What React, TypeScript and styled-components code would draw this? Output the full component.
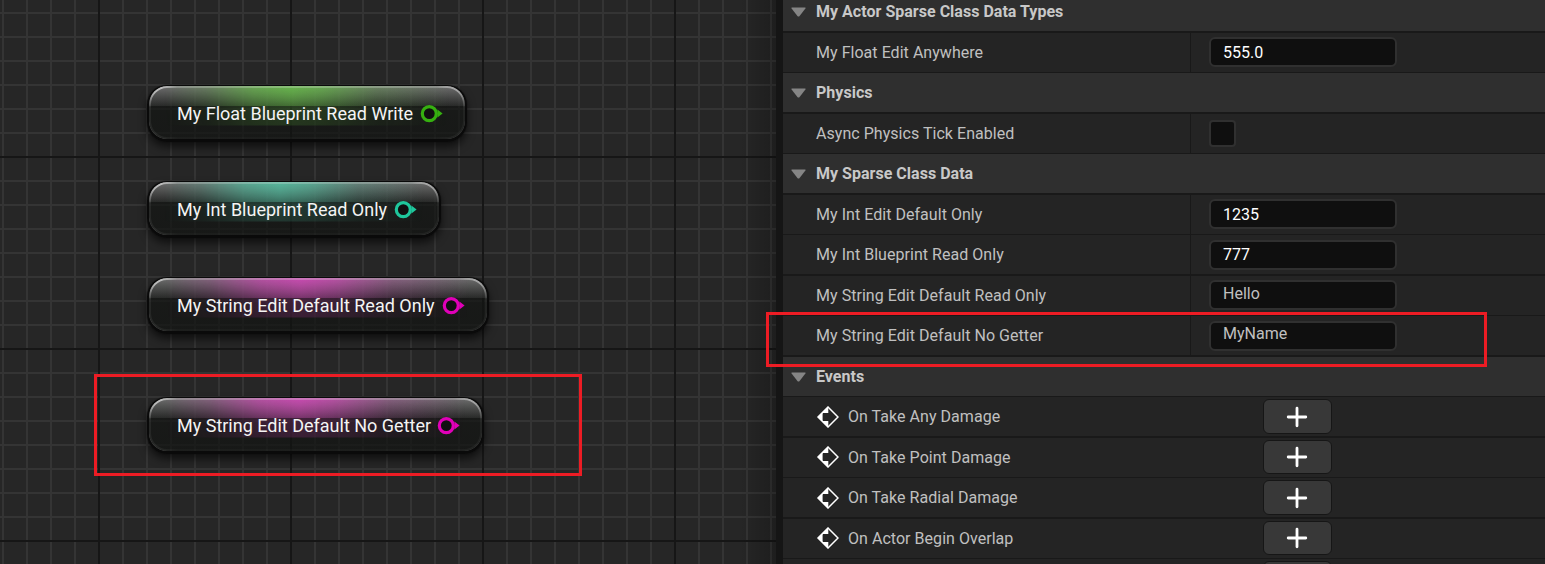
import React from "react";
import styled, { createGlobalStyle } from "styled-components";

const GlobalStyle = createGlobalStyle`
  html, body { margin: 0; padding: 0; background: #151515; }
  body { font-family: Roboto, "Liberation Sans", sans-serif; overflow: hidden; }
  * { box-sizing: border-box; }
`;

const Editor = styled.main`
  position: relative;
  display: flex;
  width: 1545px;
  height: 564px;
  overflow: hidden;
  background: #151515;
`;

const Graph = styled.section`
  position: relative;
  flex: 0 0 776px;
  height: 564px;
  overflow: hidden;
  background-color: #262626;
  background-image:
    linear-gradient(to right, transparent 740px, rgba(0, 0, 0, 0.22) 776px),
    linear-gradient(to right, #161616 2px, transparent 2px),
    linear-gradient(to bottom, #161616 2px, transparent 2px),
    linear-gradient(to right, #343434 2px, transparent 2px),
    linear-gradient(to bottom, #343434 2px, transparent 2px);
  background-size: 100% 100%, 192px 192px, 192px 192px, 24px 24px, 24px 24px;
  background-position: 0 0, 98px 0, 0 156px, 2px 0, 0 12px;
`;

const NodeBox = styled.div<{ $top: number; $width: number; $glow: string }>`
  position: absolute;
  left: 147px;
  top: ${(p) => p.$top}px;
  width: ${(p) => p.$width}px;
  height: 57px;
  display: flex;
  align-items: center;
  padding: 3px 0 0 28px;
  border: solid #0a0a0a;
  border-width: 1px 2px 3px;
  border-radius: 20px;
  background:
    linear-gradient(rgba(150, 150, 150, 0.68), rgba(90, 90, 90, 0.25)) 0 0 / 100% 20px no-repeat,
    linear-gradient(rgba(18, 20, 18, 0.66), rgba(18, 20, 18, 0.74));
  background-origin: padding-box;
  background-clip: padding-box;
  box-shadow: 0 5px 9px rgba(0, 0, 0, 0.6), 0 0 1px #0a0a0a;
  color: #f4f4f4;
  font-size: 18px;
  line-height: 24px;
  white-space: nowrap;

  /* coloured glow behind the title */
  &::before {
    content: "";
    position: absolute;
    inset: 0;
    border-radius: 18px;
    background: linear-gradient(
      to right,
      transparent 5%,
      rgb(${(p) => p.$glow} / 0.2) 18%,
      rgb(${(p) => p.$glow} / 0.62) 33%,
      rgb(${(p) => p.$glow} / 0.78) 45%,
      rgb(${(p) => p.$glow} / 0.64) 55%,
      rgb(${(p) => p.$glow} / 0.24) 72%,
      transparent 95%
    );
    mask-image: linear-gradient(#000, rgba(0, 0, 0, 0.55) 20px, rgba(0, 0, 0, 0.27) 20px, rgba(0, 0, 0, 0.22) 39px, transparent 40px);
  }

  /* bright rim on the upper edge, strongest at the corners */
  &::after {
    content: "";
    position: absolute;
    inset: 0;
    border-radius: 18px;
    border: 2px solid rgba(225, 225, 225, 0.7);
    mask-image: linear-gradient(#000 6px, rgba(0, 0, 0, 0.1) 22px, rgba(0, 0, 0, 0.1)),
      linear-gradient(to right, #000 12px, rgba(0, 0, 0, 0.4) 28px, rgba(0, 0, 0, 0.4) calc(100% - 28px), rgba(0, 0, 0, 0.75) calc(100% - 14px));
    mask-composite: intersect;
  }
`;

const NodeTitle = styled.span<{ $width: number }>`
  position: relative;
  z-index: 1;
  flex: 0 0 ${(p) => p.$width}px;
  min-width: 0;
`;

const PinIcon = styled.svg`
  position: relative;
  z-index: 1;
  flex: none;
  width: 24px;
  height: 20px;
  margin-left: 6px;
`;

const Highlight = styled.div<{ $x: number; $y: number; $w: number; $h: number }>`
  position: absolute;
  z-index: 2;
  left: ${(p) => p.$x}px;
  top: ${(p) => p.$y}px;
  width: ${(p) => p.$w}px;
  height: ${(p) => p.$h}px;
  border: 3px solid #ed1c24;
`;

const Details = styled.section`
  flex: 1;
  margin-left: 7px;
  height: 564px;
  overflow: hidden;
  background: #191919;
`;

const Header = styled.header<{ $first?: boolean; $line: number }>`
  display: flex;
  align-items: center;
  height: ${(p) => (p.$first ? 31 : 39)}px;
  margin-bottom: ${(p) => p.$line}px;
  padding: ${(p) => (p.$first ? "0 0 8px 8px" : "0 0 0 8px")};
  background: #2f2f2f;
  color: #c8c8c8;
  font-size: 16px;
  font-weight: 700;
  letter-spacing: 0.02px;
  line-height: 20px;
`;

const Arrow = styled.svg`
  width: 15px;
  height: 10px;
  margin-right: 10px;
`;

const Row = styled.div<{ $line: number }>`
  display: flex;
  height: 39px;
  margin-bottom: ${(p) => p.$line}px;
  background: #242424;
  color: #c0c0c0;
  font-size: 16px;
  letter-spacing: 0.04px;
  line-height: 20px;
`;

const Label = styled.div`
  flex: 0 0 408px;
  padding: 10px 0 0 33px;
  border-right: 1px solid #191919;
`;

const Value = styled.div<{ $offset: number }>`
  padding: ${(p) => p.$offset}px 0 0 18px;
`;

const Field = styled.div<{ $text?: boolean; $raised?: boolean }>`
  width: 188px;
  height: 30px;
  padding: ${(p) => (p.$text ? 2 : 4) - (p.$raised ? 1 : 0)}px 0 0 12px;
  border: 2px solid #303030;
  border-radius: 6px;
  background: #0f0f0f;
  color: ${(p) => (p.$text ? "#c0c0c0" : "#ffffff")};
  letter-spacing: 0;
`;

const Check = styled.div`
  width: 27px;
  height: 27px;
  border: 2px solid #303030;
  border-radius: 4px;
  background: #0f0f0f;
`;

const EventLabel = styled.div<{ $short?: boolean }>`
  display: flex;
  align-items: center;
  flex: 0 0 480px;
  padding: 0 0 ${(p) => (p.$short ? 2 : 0)}px 34px;
`;

const EventName = styled.span<{ $short?: boolean }>`
  padding-top: ${(p) => (p.$short ? 2 : 0)}px;
`;

const EventIcon = styled.svg`
  width: 22px;
  height: 22px;
  margin-right: 9px;
`;

const AddButton = styled.button<{ $short?: boolean }>`
  display: flex;
  align-items: center;
  justify-content: center;
  width: 69px;
  height: ${(p) => (p.$short ? 34 : 35)}px;
  margin: 2px 0 0;
  padding: 0 1px 0 0;
  border: 1px solid #161616;
  border-radius: 6px;
  background: #383838;
`;

const nodes = [
  { title: "My Float Blueprint Read Write", top: 85, width: 320, text: 236, glow: "100 200 65", pin: "#36b010" },
  { title: "My Int Blueprint Read Only", top: 181, width: 294, text: 210, glow: "80 205 170", pin: "#1fc79c" },
  { title: "My String Edit Default Read Only", top: 277, width: 342, text: 258, glow: "225 65 195", pin: "#e000b8" },
  { title: "My String Edit Default No Getter", top: 397, width: 337, text: 253, glow: "225 65 195", pin: "#e000b8" },
];

const events = [
  { name: "On Take Any Damage", line: 2, short: false },
  { name: "On Take Point Damage", line: 1, short: true },
  { name: "On Take Radial Damage", line: 2, short: false },
  { name: "On Actor Begin Overlap", line: 1, short: true },
];

function Section({ title, first, line = 2 }: { title: string; first?: boolean; line?: number }) {
  return (
    <Header $first={first} $line={line}>
      <Arrow viewBox="0 0 15 10">
        <path d="M1 0.5H14Q15 0.5 14.4 1.4L8.6 9Q7.5 10.2 6.4 9L0.6 1.4Q0 0.5 1 0.5Z" fill="#858585" />
      </Arrow>
      <span>{title}</span>
    </Header>
  );
}

type PropertyProps = { name: string; value: string; text?: boolean; offset?: number; line: number };

function Property({ name, value, text, offset = 4, line }: PropertyProps) {
  return (
    <Row $line={line}>
      <Label>{name}</Label>
      <Value $offset={offset}>
        <Field $text={text} $raised={offset === 5}>
          {value}
        </Field>
      </Value>
    </Row>
  );
}

function Plus() {
  return (
    <svg width="22" height="22" viewBox="0 0 22 22">
      <path d="M11 2.2V19.8M2.2 11H19.8" stroke="#fff" strokeWidth="2.8" strokeLinecap="round" />
    </svg>
  );
}

export default function App() {
  return (
    <>
      <GlobalStyle />
      <Editor>
        <Graph>
          {nodes.map((n) => (
            <NodeBox key={n.title} $top={n.top} $width={n.width} $glow={n.glow}>
              <NodeTitle $width={n.text}>{n.title}</NodeTitle>
              <PinIcon viewBox="0 0 24 20">
                <circle cx="10.3" cy="9.6" r="7" fill="#101010" stroke={n.pin} strokeWidth="3.2" />
                <path d="M18.4 5.6L23.6 9.6L18.4 13.6Z" fill={n.pin} />
              </PinIcon>
            </NodeBox>
          ))}
          <Highlight $x={94} $y={374} $w={488} $h={102} />
        </Graph>
        <Details>
          <Section title="My Actor Sparse Class Data Types" first />
          <Property name="My Float Edit Anywhere" value="555.0" line={1} />
          <Section title="Physics" />
          <Row $line={1}>
            <Label>Async Physics Tick Enabled</Label>
            <Value $offset={6}>
              <Check />
            </Value>
          </Row>
          <Section title="My Sparse Class Data" />
          <Property name="My Int Edit Default Only" value="1235" line={1} />
          <Property name="My Int Blueprint Read Only" value="777" offset={5} line={2} />
          <Property name="My String Edit Default Read Only" value="Hello" text line={1} />
          <Property name="My String Edit Default No Getter" value="MyName" text offset={5} line={2} />
          <Section title="Events" line={1} />
          {events.map((e) => (
            <Row key={e.name} $line={e.line}>
              <EventLabel $short={e.short}>
                <EventIcon viewBox="0 0 22 22">
                  <path d="M11 1L21 11L11 21L1 11Z" fill="none" stroke="#fff" strokeWidth="1.5" />
                  <path d="M11.3 0.5V7H5.6V15H11.3V21.5L0.5 11Z" fill="#fff" />
                </EventIcon>
                <EventName $short={e.short}>{e.name}</EventName>
              </EventLabel>
              <AddButton aria-label={e.name} $short={e.short}>
                <Plus />
              </AddButton>
            </Row>
          ))}
          <Row $line={0}>
            <EventLabel />
            <AddButton aria-label="Add" />
          </Row>
        </Details>
        <Highlight $x={766} $y={312} $w={721} $h={55} />
      </Editor>
    </>
  );
}
